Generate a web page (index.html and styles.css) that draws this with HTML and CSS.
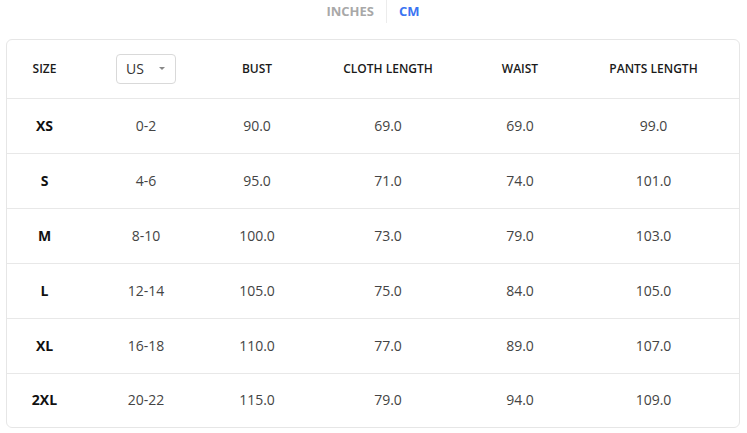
FILE: index.html
```html
<!DOCTYPE html>
<html>
<head>
<meta charset="utf-8">
<link rel="stylesheet" href="styles.css">
</head>
<body>
<div class="page">
  <div class="units">
    <span class="unit">INCHES</span>
    <span class="sep"></span>
    <span class="unit active">CM</span>
  </div>
  <div class="card">
    <div class="row head">
      <div class="cell">SIZE</div>
      <div class="cell"><div class="select"><span>US</span><span class="caret"></span></div></div>
      <div class="cell">BUST</div>
      <div class="cell">CLOTH LENGTH</div>
      <div class="cell">WAIST</div>
      <div class="cell">PANTS LENGTH</div>
    </div>
    <div class="row"><div class="cell size">XS</div><div class="cell">0-2</div><div class="cell">90.0</div><div class="cell">69.0</div><div class="cell">69.0</div><div class="cell">99.0</div></div>
    <div class="row"><div class="cell size">S</div><div class="cell">4-6</div><div class="cell">95.0</div><div class="cell">71.0</div><div class="cell">74.0</div><div class="cell">101.0</div></div>
    <div class="row"><div class="cell size">M</div><div class="cell">8-10</div><div class="cell">100.0</div><div class="cell">73.0</div><div class="cell">79.0</div><div class="cell">103.0</div></div>
    <div class="row"><div class="cell size">L</div><div class="cell">12-14</div><div class="cell">105.0</div><div class="cell">75.0</div><div class="cell">84.0</div><div class="cell">105.0</div></div>
    <div class="row"><div class="cell size">XL</div><div class="cell">16-18</div><div class="cell">110.0</div><div class="cell">77.0</div><div class="cell">89.0</div><div class="cell">107.0</div></div>
    <div class="row last"><div class="cell size">2XL</div><div class="cell">20-22</div><div class="cell">115.0</div><div class="cell">79.0</div><div class="cell">94.0</div><div class="cell">109.0</div></div>
  </div>
</div>
</body>
</html>
```
FILE: styles.css
```css
* { box-sizing: border-box; }
body {
  margin: 0;
  background: #fff;
  font-family: "Open Sans", "Noto Sans", sans-serif;
  color: #333;
}
.page { width: 747px; padding: 0 7px 0 6px; }
.units {
  height: 39px;
  display: flex;
  justify-content: center;
  align-items: flex-start;
  gap: 12px;
}
.unit {
  font-size: 13px;
  font-weight: 700;
  line-height: 22px;
  color: #a8a8a8;
}
.unit.active { color: #3b74f2; }
.sep {
  width: 1px;
  height: 23px;
  background: #ececec;
}
.card {
  border: 1px solid #e6e6e6;
  border-radius: 6px;
  overflow: hidden;
}
.row {
  display: grid;
  grid-template-columns: 75px 128px 94px 168px 96px 171px;
  height: 55px;
  padding-bottom: 2px;
  border-bottom: 1px solid #e8e8e8;
  align-items: center;
  font-size: 14px;
  color: #444;
}
.row.head { height: 59px; padding-bottom: 1px; font-size: 12px; font-weight: 600; color: #1a1a1a; }
.row.last { border-bottom: none; height: 53px; }
.cell { text-align: center; display: flex; justify-content: center; align-items: center; }
.cell.size { font-weight: 700; color: #111; font-size: 14px; }
.select {
  width: 60px;
  height: 30px;
  border: 1px solid #d9d9d9;
  border-radius: 4px;
  display: flex;
  align-items: center;
  padding: 0 0 0 9px;
  font-size: 14px;
  font-weight: 400;
  color: #333;
  gap: 15px;
}
.caret {
  width: 0; height: 0;
  border-left: 3px solid transparent;
  border-right: 3px solid transparent;
  border-top: 3px solid #888;
}
```
